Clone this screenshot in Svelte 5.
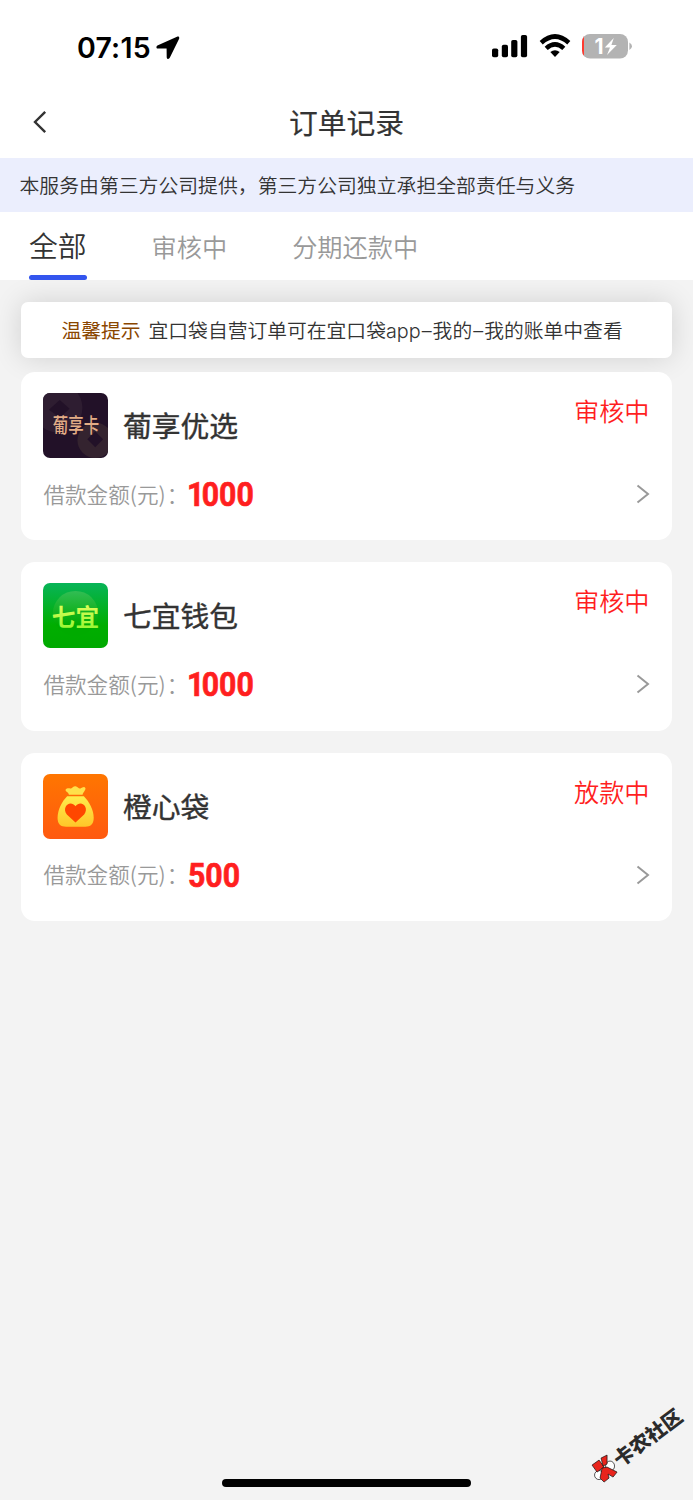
<script>
  const TABS = ['全部', '审核中', '分期还款中']
  let current = 0

  const ORDERS = [
    { icon: 'puxiang', name: '葡享优选', amount: '1000', status: '审核中' },
    { icon: 'qiyi', name: '七宜钱包', amount: '1000', status: '审核中' },
    { icon: 'chengxin', name: '橙心袋', amount: '500', status: '放款中' }
  ]
</script>

<main class="page" lang="zh-CN">
  <header class="status-bar">
    <div class="clock">
      <span>07:15</span>
      <svg width="24" height="24" viewBox="0 0 24 24"><path d="M21 .8 1.4 9.6C-.1 10.4.2 12.5 1.8 12.5L10.6 12.6 10.7 21.2C10.8 23.4 13 23.5 13.9 21.6L23 3C23.8 1.1 22.6.2 21 .8Z" /></svg>
    </div>
    <div class="signals">
      <svg width="36" height="24" viewBox="0 0 36 24">
        <rect x="0" y="14.5" width="6.2" height="8.7" rx="1.8" />
        <rect x="9.8" y="10.8" width="6.2" height="12.4" rx="1.8" />
        <rect x="19.2" y="5.9" width="6.2" height="17.3" rx="1.8" />
        <rect x="28.9" y="1" width="6.2" height="22.2" rx="1.8" />
      </svg>
      <svg class="wifi" width="32" height="24" viewBox="0 0 32 24">
        <path d="M2.2 8.7Q16-3.7 29.8 8.7" />
        <path d="M7.2 14.4Q16 6.5 24.8 14.4" />
        <path class="dot" d="M11.3 18Q16 14.4 20.7 18L16 23Z" />
      </svg>
      <svg class="battery" width="50" height="26" viewBox="0 0 50 26">
        <defs><clipPath id="cell"><rect x="0" y="1" width="46" height="24.6" rx="8" /></clipPath></defs>
        <g clip-path="url(#cell)">
          <rect width="46" height="26" fill="#b3b3b3" />
          <rect width="2" height="26" fill="#ff3b30" />
        </g>
        <path d="M47.4 9.6Q50 11 50 13.3T47.4 17Z" fill="#b3b3b3" />
        <text x="12.5" y="21">1</text>
        <path d="M31.8 5 22.8 14.6H28L25 22 34.8 12H29.4Z" fill="#fff" />
      </svg>
    </div>
  </header>

  <nav class="title-bar">
    <svg class="back" width="14" height="24" viewBox="0 0 14 24"><path d="M12.2 1.8 2 12 12.2 22.2" /></svg>
    <h1>订单记录</h1>
  </nav>

  <p class="notice">本服务由第三方公司提供，第三方公司独立承担全部责任与义务</p>

  <div class="tabs">
    {#each TABS as tab, i}
      <button class="tab" class:active={current === i} on:click={() => (current = i)}>{tab}</button>
    {/each}
  </div>

  <section class="content">
    <p class="tip"><b>温馨提示</b><span>宜口袋自营订单可在宜口袋<i>app</i><i class="dash">–</i>我的<i class="dash">–</i>我的账单中查看</span></p>

    <div class="orders">
      {#each ORDERS as order}
        <article class="order">
          <div class="order-head">
            <svg class="logo" width="65" height="65" viewBox="0 0 66 66">
              {#if order.icon === 'puxiang'}
                <rect width="66" height="66" fill="#221128" />
                <circle cx="15" cy="15" r="25" fill="#2e1d31" />
                <path d="M17 7 27 16 17 25 6 17Z" fill="#221128" />
                <circle cx="53" cy="48" r="18" fill="#34232f" />
                <path d="M53 39 61 47 53 55 45 47Z" fill="#221128" />
                <text class="logo-pu" transform="translate(10 41) scale(.88 1.15)">葡享卡</text>
              {:else if order.icon === 'qiyi'}
                <defs>
                  <linearGradient id="green" x2="0" y2="1"><stop stop-color="#08b458" /><stop offset="0.65" stop-color="#00ae00" /><stop offset="1" stop-color="#00a900" /></linearGradient>
                  <linearGradient id="disc" x2="0" y2="1"><stop stop-color="#32bd55" /><stop offset="0.75" stop-color="#00ab00" /></linearGradient>
                  <linearGradient id="lime" x2="0" y2="1"><stop stop-color="#f0ff65" /><stop offset="1" stop-color="#8cf52c" /></linearGradient>
                </defs>
                <rect width="66" height="66" fill="url(#green)" />
                <circle cx="33" cy="31" r="23" fill="url(#disc)" />
                <text class="logo-qi" x="9" y="43.5" fill="url(#lime)">七宜</text>
              {:else}
                <defs>
                  <linearGradient id="orange" x2="0" y2="1"><stop stop-color="#ff7600" /><stop offset="1" stop-color="#ff5910" /></linearGradient>
                  <linearGradient id="gold" x2="0" y2="1"><stop stop-color="#ffec4c" /><stop offset="1" stop-color="#ffc629" /></linearGradient>
                </defs>
                <rect width="66" height="66" fill="url(#orange)" />
                <path d="M23.2 15.5C25 13.6 27 15 28.4 14.6S30.7 12.2 33 12.4 36.2 15.3 38 14.7 41.8 12 43 14.2C43.8 16.2 40.6 18.5 40.2 21H26.3C26 18.5 21.7 17.4 23.2 15.5Z" fill="#ffe04a" />
                <path d="M24.5 22.5H41.5C47 28 51.5 36.5 51.5 44.5 51.5 51.5 48 53.5 43 53.5H23.5C18 53.5 14.8 51.5 14.8 44.5 14.8 36.5 19 28 24.5 22.5Z" fill="url(#gold)" />
                <path d="M33 49.2 24.2 41C18.5 34 27.5 25.5 33 32.8 38.5 25.5 47.5 34 41.8 41Z" fill="#ff4700" />
              {/if}
            </svg>
            <h2>{order.name}</h2>
            <span class="state">{order.status}</span>
          </div>
          <div class="order-foot">
            <span class="label">借款金额(元)<i>：</i></span>
            <strong class="amount" class:thousand={order.amount[0] === '1'}>{order.amount}</strong>
            <svg class="arrow" width="14" height="20" viewBox="0 0 14 20"><path d="M1.5 1.5 12 10 1.5 18.5" /></svg>
          </div>
        </article>
      {/each}
    </div>
  </section>

  <div class="watermark">
    <svg width="26" height="24" viewBox="0 0 26 24">
      <g stroke="#111" stroke-width="0.7" transform="rotate(37 13 12)">
        <ellipse cx="7" cy="18" rx="4.5" ry="4.5" fill="#fff" />
        <ellipse cx="18" cy="9" rx="4.5" ry="5" fill="#fff" />
        <path d="M0 8 7 3 12 10 5 15Z" fill="#e8241c" />
        <path d="M9 1 15-2 15 7 11 9Z" fill="#e8241c" />
        <path d="M10 11 15 10 25 15 21 20 16 17 17 21 12 25 8 21Z" fill="#e8241c" />
      </g>
    </svg>
    <span>卡农社区</span>
  </div>
  <div class="home-bar"></div>
</main>

<style>
:global(body) {
  background: #f3f3f3;
}

.page {
  position: relative;
  width: 693px;
  height: 1500px;
  overflow: hidden;
  background: #f3f3f3;
  color: #333;
  font-family: "Noto Sans CJK SC", sans-serif;
}

h1, h2, p {
  margin: 0;
  font-weight: 400;
}

.status-bar {
  height: 87px;
  box-sizing: border-box;
  padding: 34px 61px 0 77px;
  display: flex;
  justify-content: space-between;
  align-items: flex-start;
  background: #fff;
  color: #000;
}

.clock {
  display: flex;
  align-items: center;
  gap: 5px;
  font: 600 28.5px/27px Inter, sans-serif;
  letter-spacing: 0.2px;
}

.signals {
  display: flex;
  gap: 12px;
}

.signals svg:first-child {
  margin-right: -1px;
}

.signals .wifi {
  fill: none;
  stroke: #000;
  stroke-width: 4.6;
}

.wifi .dot {
  fill: #000;
  stroke: none;
}

.signals .battery {
  margin-top: -1px;
  margin-left: -1px;
}

.battery text {
  font: 700 21px Inter, sans-serif;
  fill: #fff;
}

.title-bar {
  position: relative;
  height: 71px;
  display: flex;
  justify-content: center;
  align-items: center;
  background: #fff;
}

.title-bar .back {
  position: absolute;
  left: 33px;
  top: 23px;
}

.back path, .arrow path {
  fill: none;
  stroke: #333;
  stroke-width: 2.4;
}

.title-bar h1 {
  font-size: 28.8px;
  font-weight: 400;
  line-height: 69px;
  height: 71px;
  -webkit-text-stroke: 0.2px #333;
}

.notice {
  height: 54px;
  padding-left: 19.5px;
  background: #ebeefd;
  font-size: 19.85px;
  font-weight: 350;
  line-height: 54px;
  white-space: nowrap;
}

.tabs {
  position: relative;
  z-index: 1;
  height: 68px;
  padding-left: 29px;
  display: flex;
  gap: 65px;
  background: #fff;
}

.tab {
  height: 68px;
  padding: 0;
  border: none;
  background: none;
  color: #999;
  font: 350 25.2px/66px "Noto Sans CJK SC", sans-serif;
}

.tab.active {
  position: relative;
  padding-bottom: 2px;
  color: #333;
  font-size: 28.8px;
}

.tab.active::after {
  content: '';
  position: absolute;
  left: 0;
  right: 0;
  bottom: 0;
  height: 5px;
  border-radius: 3px;
  background: #3355ee;
}

.content {
  padding: 22px 21.5px 0 21.4px;
}

.tip {
  height: 56px;
  padding-left: 40px;
  display: flex;
  gap: 8px;
  border-radius: 7px;
  background: #fff;
  box-shadow: 0 0 29px rgba(0, 0, 0, .14);
  font-size: 19.8px;
  font-weight: 350;
  line-height: 56px;
  white-space: nowrap;
}

.tip b {
  color: #8a4600;
  font-weight: 400;
}

.tip i {
  font-family: Inter, sans-serif;
  font-style: normal;
}

.tip .dash {
  display: inline-block;
  width: 12px;
  text-align: center;
}

.orders {
  position: relative;
  margin-top: 14px;
  display: flex;
  flex-direction: column;
  gap: 22.3px;
}

.order {
  height: 168.2px;
  box-sizing: border-box;
  padding: 21px 22px 0;
  border-radius: 14px;
  background: #fff;
}

.order-head {
  height: 65px;
  display: flex;
}

.logo {
  border-radius: 7px;
}

.logo-pu {
  font: 500 17.8px "Noto Sans CJK SC", sans-serif;
  fill: #e3ad86;
}

.logo-qi {
  font: 700 24px "Noto Sans CJK SC", sans-serif;
}

.order h2 {
  margin-left: 14.5px;
  font-size: 28.8px;
  font-weight: 400;
  line-height: 63px;
  -webkit-text-stroke: 0.4px #333;
}

.state {
  margin-left: auto;
  color: #ff1f1f;
  font-size: 25.2px;
  font-weight: 350;
  line-height: 35px;
}

.order-foot {
  height: 72px;
  display: flex;
  align-items: center;
}

.label {
  width: 145px;
  margin-top: -2px;
  color: #999;
  font-size: 21.6px;
  font-weight: 350;
  white-space: nowrap;
}

.label i {
  margin-left: 1px;
  font-style: normal;
}

.amount {
  color: #ff1f1f;
  font: 700 34px/40px Roboto, sans-serif;
  -webkit-text-stroke: 0.7px #ff1f1f;
  transform: scaleX(.89);
  transform-origin: left;
}

.amount.thousand {
  margin-left: -1px;
}

.amount.thousand::first-letter {
  letter-spacing: -3px;
}

.arrow {
  margin-left: auto;
}

.arrow path {
  stroke: #999;
  stroke-width: 2;
}

.watermark {
  position: absolute;
  left: 584px;
  top: 1430px;
  display: flex;
  align-items: center;
  transform: rotate(-37deg);
  color: #2b2b2b;
  font-size: 20px;
  font-weight: 900;
  line-height: 30px;
  white-space: nowrap;
}

.watermark svg {
  overflow: visible;
}

.home-bar {
  position: absolute;
  left: 222px;
  bottom: 13px;
  width: 249px;
  height: 8px;
  border-radius: 4px;
  background: #000;
}
</style>
